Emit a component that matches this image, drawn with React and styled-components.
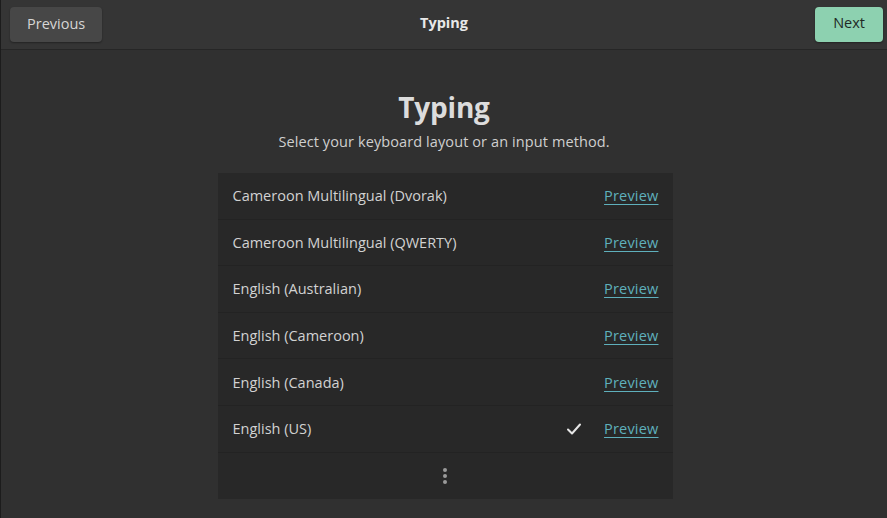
import styled, { createGlobalStyle } from "styled-components";

const Global = createGlobalStyle`
  html, body { margin: 0; padding: 0; background: #303030; }
  body { font-family: "Open Sans", "Noto Sans", sans-serif; }
  #root { height: 518px; }
`;

const Window = styled.div`
  width: 887px;
  height: 518px;
  display: flex;
  flex-direction: column;
  background: #303030;
  border-left: 1px solid #1c1c1c;
  box-sizing: border-box;
  overflow: hidden;
`;

const HeaderBar = styled.header`
  height: 50px;
  flex: none;
  box-sizing: border-box;
  display: flex;
  align-items: center;
  justify-content: space-between;
  padding: 0 4px 0 9px;
  background: #353535;
  border-bottom: 1px solid #262626;
  position: relative;
`;

const HeaderTitle = styled.div`
  position: absolute;
  left: 0;
  right: 0;
  top: 13px;
  text-align: center;
  font-weight: 700;
  font-size: 14.5px;
  line-height: 20px;
  color: #e8e8e8;
  pointer-events: none;
`;

const Button = styled.button`
  height: 35px;
  padding: 0 ${(p) => (p.$primary ? "18px" : "17px")} 3px;
  border-radius: 4px;
  border: none;
  font-family: inherit;
  font-size: 14.5px;
  background: ${(p) => (p.$primary ? "#8dd1b0" : "#474747")};
  color: ${(p) => (p.$primary ? "#1f2a25" : "#d6d6d6")};
  box-shadow: 0 1px 2px rgba(0, 0, 0, 0.35);
  margin-top: ${(p) => (p.$primary ? "-1px" : "0")};
`;

const Content = styled.main`
  flex: 1;
  display: flex;
  flex-direction: column;
  align-items: center;
  padding-top: 37px;
`;

const Title = styled.h1`
  margin: 0;
  font-size: 28px;
  line-height: 40px;
  font-weight: 700;
  color: #dcdcdc;
  letter-spacing: -0.2px;
`;

const Subtitle = styled.p`
  margin: 5px 0 0;
  font-size: 14.5px;
  line-height: 20px;
  color: #cfcfcf;
  letter-spacing: 0.1px;
`;

const List = styled.div`
  margin-top: 21px;
  margin-left: 2px;
  width: 455px;
  background: #282828;
  display: flex;
  flex-direction: column;
`;

const Row = styled.div`
  height: 46.6px;
  box-sizing: border-box;
  display: flex;
  align-items: center;
  padding: 0 14px 0 15px;
  border-bottom: 1px solid #232323;
  font-size: 14.5px;
  color: #d2d2d2;
`;

const Label = styled.span`
  flex: 1;
`;

const Check = styled.span`
  width: 16px;
  display: flex;
  margin-right: 22px;
  color: #e6e6e6;
`;

const Preview = styled.a`
  color: #5fb0bc;
  text-decoration: underline;
  text-underline-offset: 3px;
  font-size: 14.5px;
  letter-spacing: 0.2px;
`;

const MoreRow = styled.div`
  height: 46px;
  display: flex;
  align-items: center;
  justify-content: center;
`;

const layouts = [
  { name: "Cameroon Multilingual (Dvorak)" },
  { name: "Cameroon Multilingual (QWERTY)" },
  { name: "English (Australian)" },
  { name: "English (Cameroon)" },
  { name: "English (Canada)" },
  { name: "English (US)", selected: true },
];

const CheckIcon = () => (
  <svg width="16" height="14" viewBox="0 0 16 14">
    <path d="M2 7.5 L6 11.5 L14 2.5" fill="none" stroke="currentColor" strokeWidth="2" strokeLinecap="round" strokeLinejoin="round" />
  </svg>
);

const MoreIcon = () => (
  <svg width="6" height="20" viewBox="0 0 6 20">
    <circle cx="3" cy="4" r="2" fill="#9a9a9a" />
    <circle cx="3" cy="10" r="2" fill="#9a9a9a" />
    <circle cx="3" cy="16" r="2" fill="#9a9a9a" />
  </svg>
);

export default function App() {
  return (
    <>
      <Global />
      <Window>
        <HeaderBar>
          <Button>Previous</Button>
          <HeaderTitle>Typing</HeaderTitle>
          <Button $primary>Next</Button>
        </HeaderBar>
        <Content>
          <Title>Typing</Title>
          <Subtitle>Select your keyboard layout or an input method.</Subtitle>
          <List>
            {layouts.map((l) => (
              <Row key={l.name}>
                <Label>{l.name}</Label>
                {l.selected && (
                  <Check>
                    <CheckIcon />
                  </Check>
                )}
                <Preview>Preview</Preview>
              </Row>
            ))}
            <MoreRow>
              <MoreIcon />
            </MoreRow>
          </List>
        </Content>
      </Window>
    </>
  );
}
